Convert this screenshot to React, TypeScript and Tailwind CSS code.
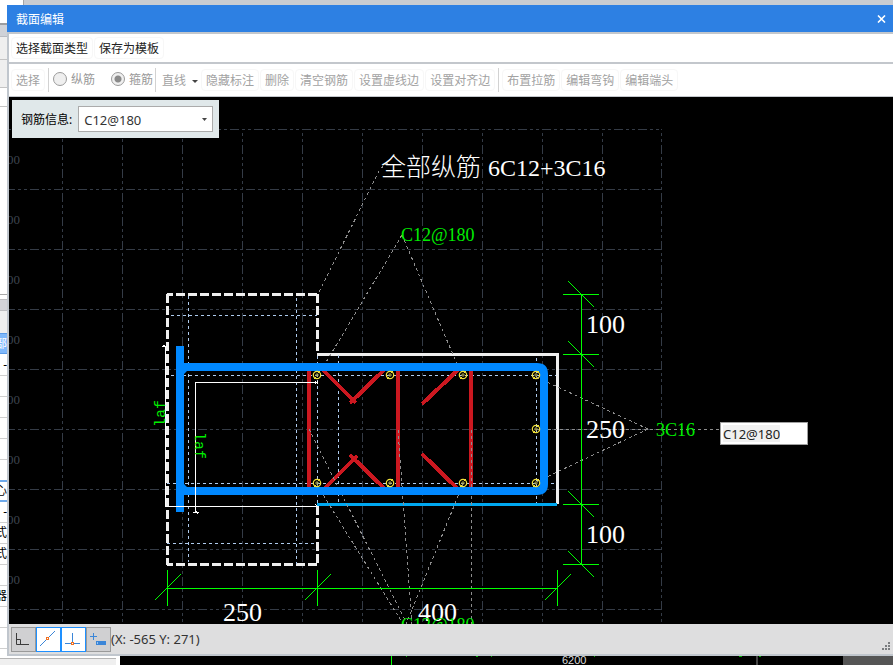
import React, { useState } from "react";
import clsx from "clsx";

const GRID_X = [62, 122, 182, 242, 302, 362, 422, 482, 542, 602, 661];
const GRID_Y = [129, 189, 249, 309, 369, 429, 489, 549, 609];

const REBARS = [
  [317, 375],
  [390, 375],
  [463, 375],
  [536, 375],
  [536, 429],
  [317, 483],
  [390, 483],
  [463, 483],
  [536, 483],
];

// rows of the main window that stay visible left of the dialog
const SIDE_ROWS = [
  { className: "h-[25px] bg-white border-b-2 border-[#9c9da0]" },
  { className: "h-[12px] bg-[#cfd2d8] border-b border-[#b9bcc2]" },
  { className: "h-[23px] bg-[#efefef] border-b border-[#c4c4c4]" },
  { className: "h-[28px] bg-[#efefef] border-b border-[#c4c4c4]" },
  { className: "h-[19px] bg-white border-b border-[#c4c4c4]" },
  { className: "h-[188px] bg-white border-b border-[#a8a8a8]" },
  { className: "h-[4px] bg-white" },
  { className: "h-[12px] bg-[#d2d3d8] border-y border-[#bdbdc0]" },
  { className: "h-[22px] bg-[#efefef]" },
  { className: "h-[21px] bg-[#7fb8fb] border-y border-[#5b9be8] text-white", text: "部" },
  { className: "h-[22px] bg-white border-b border-[#cfcfcf] text-black", text: "-" },
  { className: "h-[21px] bg-white border-b border-[#cfcfcf]" },
  { className: "h-[21px] bg-white border-b border-[#cfcfcf]" },
  { className: "h-[21px] bg-white border-b border-[#cfcfcf]" },
  { className: "h-[21px] bg-white border-b border-[#cfcfcf]" },
  { className: "h-[22px] bg-white border-b-2 border-[#6ea9ea]" },
  { className: "h-[20px] bg-white border-b-2 border-[#6ea9ea] text-black", text: "心" },
  { className: "h-[21px] bg-white border-b border-[#cfcfcf] text-black", text: "-" },
  { className: "h-[21px] bg-white border-b border-[#cfcfcf] text-black", text: "式" },
  { className: "h-[21px] bg-white border-b border-[#cfcfcf] text-black", text: "式" },
  { className: "h-[21px] bg-white border-b border-[#cfcfcf]" },
  { className: "h-[21px] bg-white border-b border-[#cfcfcf] text-black", text: "器" },
  { className: "h-[21px] bg-white border-b border-[#cfcfcf]" },
  { className: "h-[21px] bg-white border-b border-[#cfcfcf]" },
  { className: "grow bg-white" },
];

function ToolButton({ children, disabled }: { children: React.ReactNode; disabled?: boolean }) {
  return (
    <button
      type="button"
      disabled={disabled}
      className="flex h-[22px] shrink-0 items-center rounded border border-[#f7f7f7] px-1 pt-0.5 whitespace-nowrap text-[#222] disabled:text-[#a2a2a2]"
    >
      {children}
    </button>
  );
}

function Separator() {
  return <div className="h-6 w-px shrink-0 bg-[#d2d2d2]" />;
}

function BarRadio({ label, value, defaultChecked }: { label: string; value: string; defaultChecked?: boolean }) {
  return (
    <label className="flex shrink-0 items-center gap-1 whitespace-nowrap text-[#999]">
      <input
        type="radio"
        name="bar-kind"
        value={value}
        defaultChecked={defaultChecked}
        disabled
        className="mb-0.5 size-[14px] appearance-none rounded-full border border-[#9b9b9b] bg-[#efefef] checked:bg-[radial-gradient(circle,#8a8a8a_3px,#efefef_4px)]"
      />
      {label}
    </label>
  );
}

function RightTick({ y }: { y: number }) {
  return <path d={`M563 ${y + 0.5}H599M568 ${y - 13}L594 ${y + 13}`} />;
}

function BottomTick({ x }: { x: number }) {
  return <path d={`M${x + 0.5} 570V606M${x - 12} 600L${x + 14} 574`} />;
}

function SectionDrawing() {
  return (
    <svg width="884" height="527" viewBox="9 97 884 527" fill="none" className="block shrink-0" role="img" aria-label="截面">
      <g stroke="#343b46" shapeRendering="crispEdges" strokeDasharray="9 3 3 3 3 3">
        {GRID_Y.map((y) => (
          <path key={y} d={`M9 ${y + 0.5}H662`} strokeDashoffset={y === 129 ? 19 : 3} />
        ))}
        {GRID_X.map((x) => (
          <path key={x} d={`M${x + 0.5} 129V623`} strokeDashoffset="8" />
        ))}
      </g>
      <g className="font-['Liberation_Serif',serif] text-[13px]" fill="#3d444f" textAnchor="end">
        {GRID_Y.slice(0, 8).map((y) => (
          <text key={y} x="20" y={y + 35}>
            00
          </text>
        ))}
      </g>

      {/* concrete outline */}
      <g stroke="#efefef" strokeWidth="3" shapeRendering="crispEdges">
        <path d="M167 294.5H318" strokeDasharray="9 3" strokeDashoffset="3" />
        <path d="M167.5 294V565" strokeDasharray="9 3" />
        <path d="M167 564.5H318" strokeDasharray="9 3" strokeDashoffset="3" />
        <path d="M317.5 294V354M317.5 506V565" strokeDasharray="9 3" />
        <path d="M317 354.5H557.5V504" />
      </g>
      <path d="M317 504.5H557" stroke="#00a8f0" strokeWidth="3" shapeRendering="crispEdges" />

      {/* cover lines */}
      <g stroke="#aecbee" strokeDasharray="3 3" shapeRendering="crispEdges">
        <path d="M188.5 296V562M296.5 298V564M317.5 356V506M338.5 355V503M536.5 358V503" />
        <path d="M171 315.5H317M171 375.5H556M167 483.5H556M167 543.5H317" />
      </g>

      {/* ties */}
      <g stroke="#cc1820" strokeWidth="4" shapeRendering="crispEdges">
        <path d="M309 371V487M398 371V487M471 371V487" />
        <path d="M323 370L356 403M384 370L350 403M458 370L422 404" />
        <path d="M325 488L357 456M384 488L350 455M457 488L422 454" />
      </g>

      {/* leaders */}
      <g stroke="#8d8d8d" strokeDasharray="3 3" shapeRendering="crispEdges">
        <path d="M388 163L380 169L318 294" />
        <path d="M402 235L325 364M402 235L460 371" />
        <path d="M648 429L536 377M648 429L536 482M536 429.5H720" />
        <path d="M309 429L407 624M317 485L403 624M398 430L412 624M463 484L406 624M471.5 430V624" />
      </g>

      {/* stirrup */}
      <g stroke="#0088ff" strokeWidth="8">
        <path d="M180 346V512" />
        <path d="M180 367H537Q544 367 544 374V484Q544 491 537 491H180" />
      </g>
      <path d="M184 371H187L184 374ZM184 487H187L184 484Z" fill="#0088ff" />

      {REBARS.map(([x, y]) => (
        <g key={`${x}-${y}`} transform={`translate(${x} ${y})`}>
          <circle r="3.7" stroke="#f2e23c" strokeWidth="1.2" />
          <path d="M-2 0H2M0 -2V2" stroke="#a8a24c" />
          <path d="M1 -2L3 -4M-1 2L-3 4" stroke="#f2e23c" />
        </g>
      ))}

      {/* anchorage lines */}
      <g stroke="#ffffff" shapeRendering="crispEdges">
        <path d="M165.5 346V506.5H318M162 346.5H167M163 345L166 347M315 504L318 507" />
        <path d="M195.5 513V382.5H318M193 512.5H199M194 513L196 511L198 514M315 381L318 384M318 381L315 384" />
      </g>

      <g stroke="#00ff00" shapeRendering="crispEdges">
        <path d="M581.5 294V564M167 588.5H557" />
        <RightTick y={294} />
        <RightTick y={354} />
        <RightTick y={504} />
        <RightTick y={564} />
        <BottomTick x={167} />
        <BottomTick x={317} />
        <BottomTick x={557} />
      </g>

      <g className="font-['Liberation_Serif',serif] text-[26px]" fill="#ffffff">
        <text x="586" y="333">100</text>
        <text x="586" y="438">250</text>
        <text x="586" y="543">100</text>
        <text x="223" y="621">250</text>
        <text x="418" y="621">400</text>
      </g>
      <text x="381" y="176" fill="#ffffff" className="font-['Noto_Sans_CJK_SC',sans-serif] text-[25px] font-light">
        全部纵筋
      </text>
      <text x="488" y="176" fill="#ffffff" className="font-['Liberation_Serif',serif] text-[24px]">
        6C12+3C16
      </text>
      <g className="font-['Liberation_Serif',serif] text-[18px]" fill="#00ee00">
        <text x="401" y="241">C12@180</text>
        <text x="656" y="436">3C16</text>
        <text x="401" y="631">C12@180</text>
      </g>
      <g className="font-['Liberation_Mono',monospace] text-[15px]" fill="#00ee00">
        <text transform="translate(165 427) rotate(-90)">laf</text>
        <text transform="translate(195 432) rotate(90)">laf</text>
      </g>
    </svg>
  );
}

const SNAP_TOOLS = [
  {
    label: "直角",
    icon: (
      <g stroke="#3a3a3a" strokeWidth="1">
        <path d="M4.5 5V16.5H17M4.5 11.5H8.5V16.5" />
      </g>
    ),
  },
  {
    label: "中点",
    icon: (
      <>
        <path d="M3 18L18 3" stroke="#3b86d8" />
        <rect x="9.5" y="9.5" width="2" height="2" fill="#fff" stroke="#f07022" />
      </>
    ),
  },
  {
    label: "垂足",
    icon: (
      <>
        <path d="M10.5 5V15.5M3 15.5H18" stroke="#3b86d8" strokeWidth="1" />
        <rect x="9.5" y="14.5" width="2" height="2" fill="#fff" stroke="#f07022" />
      </>
    ),
  },
  {
    label: "动态输入",
    icon: (
      <>
        <path d="M6.5 5V12M3 8.5H10" stroke="#3b86d8" />
        <rect x="9" y="13" width="10" height="4" fill="#3b86d8" />
        <path d="M10.5 14V16" stroke="#9cc4ee" />
      </>
    ),
  },
];

function StatusBar() {
  const [active, setActive] = useState([false, true, true, false]);

  return (
    <footer className="flex h-8 items-center border-b-2 border-[#c0c6cd] bg-[#dededf] pl-0.5">
      {SNAP_TOOLS.map((tool, i) => (
        <button
          key={tool.label}
          type="button"
          aria-label={tool.label}
          aria-pressed={active[i]}
          onClick={() => setActive(active.map((on, n) => (n === i ? !on : on)))}
          className={clsx(
            "flex size-[25px] shrink-0 items-center justify-center border",
            active[i] ? "border-[#1e90ff] bg-white" : "border-[#9a9a9a] bg-[#d0d0d2]"
          )}
        >
          <svg width="23" height="23" viewBox="0 0 23 23" fill="none">
            {tool.icon}
          </svg>
        </button>
      ))}
      <span className="text-[13px] whitespace-nowrap text-[#333]">(X: -565 Y: 271)</span>
      <svg width="9" height="9" viewBox="0 0 9 9" fill="#7a7d80" className="mt-3.5 mr-0.5 ml-auto">
        <path d="M6 0h2v2h-2zM3 3h2v2h-2zM6 3h2v2h-2zM0 6h2v2h-2zM3 6h2v2h-2zM6 6h2v2h-2z" />
      </svg>
    </footer>
  );
}

export default function App() {
  const [barInfo, setBarInfo] = useState("C12@180");
  const [edit, setEdit] = useState("C12@180");

  return (
    <div className="flex min-h-screen flex-col overflow-hidden bg-white font-['Noto_Sans','Noto_Sans_CJK_SC',sans-serif] text-[12px] leading-4">
      <div className="flex grow">
        <aside className="flex w-[7px] shrink-0 flex-col overflow-hidden" aria-hidden="true">
          {SIDE_ROWS.map((row, i) => (
            <div key={i} className={clsx("flex shrink-0 items-center justify-end overflow-hidden", row.className)}>
              {row.text}
            </div>
          ))}
        </aside>

        <main className="flex min-w-0 grow flex-col">
          <div className="flex h-[5px] bg-[#c9ccd1]">
            <div className="w-[17px] border-r border-[#a5a5a5] bg-white" />
          </div>
          <header className="flex h-[27px] items-center justify-between bg-[#2d80e3] pr-[7px] pl-[9px] text-white">
            <h1 className="pt-0.5">截面编辑</h1>
            <button type="button" aria-label="关闭">
              <svg width="9" height="8" viewBox="0 0 9 8" fill="none" stroke="#fff" strokeWidth="1.6">
                <path d="M1 0.5L8 7.5M8 0.5L1 7.5" />
              </svg>
            </button>
          </header>

          <div className="flex grow flex-col border-l-2 border-[#c0c6cd]">
            <nav className="flex h-[30px] items-center gap-px border-t-2 border-[#c3c7cc] bg-white pl-0.5">
              <ToolButton>选择截面类型</ToolButton>
              <ToolButton>保存为模板</ToolButton>
            </nav>
            <div className="flex h-[35px] items-center gap-px border-t-2 border-b border-[#c3c7cc] bg-white pl-0.5" role="toolbar">
              <ToolButton disabled>选择</ToolButton>
              <div className="ml-0.5 flex items-center gap-1">
                <Separator />
                <BarRadio label="纵筋" value="longitudinal" />
                <div className="ml-3">
                  <BarRadio label="箍筋" value="stirrup" defaultChecked />
                </div>
                <div className="-ml-0.5">
                  <Separator />
                </div>
              </div>
              <button type="button" disabled className="flex shrink-0 items-center gap-1.5 px-[5px] pt-0.5 whitespace-nowrap text-[#a2a2a2]">
                直线
                <svg width="6" height="3" viewBox="0 0 6 3" fill="#444">
                  <path d="M0 0H6L3 3Z" />
                </svg>
              </button>
              <div className="-ml-[3px] flex gap-px">
                <ToolButton disabled>隐藏标注</ToolButton>
                <ToolButton disabled>删除</ToolButton>
                <ToolButton disabled>清空钢筋</ToolButton>
                <ToolButton disabled>设置虚线边</ToolButton>
                <ToolButton disabled>设置对齐边</ToolButton>
              </div>
              <div className="mx-0.5">
                <Separator />
              </div>
              <ToolButton disabled>布置拉筋</ToolButton>
              <ToolButton disabled>编辑弯钩</ToolButton>
              <ToolButton disabled>编辑端头</ToolButton>
            </div>

            <section className="relative grow overflow-hidden bg-black">
              <SectionDrawing />
              <div className="absolute top-[3px] left-[3px] flex h-[38px] items-center gap-1.5 bg-[#e0e8ea] pr-1.5 pl-[9px]">
                <label htmlFor="bar-info" className="pt-0.5 whitespace-nowrap text-black">
                  钢筋信息:
                </label>
                <div className="relative">
                  <select
                    id="bar-info"
                    value={barInfo}
                    onChange={(e) => setBarInfo(e.target.value)}
                    className="block h-[26px] w-[135px] appearance-none border border-[#ababab] bg-white pt-px pl-[5px] text-[13px] text-[#333]"
                  >
                    <option>C12@180</option>
                  </select>
                  <svg width="5" height="3" viewBox="0 0 5 3" fill="#444" className="pointer-events-none absolute top-3 right-1.5">
                    <path d="M0 0H5L2.5 3Z" />
                  </svg>
                </div>
              </div>
              <div className="absolute top-[325px] left-[711px] flex h-[23px] w-[88px] items-center border border-[#a0a0a0] bg-white px-0.5">
                <input
                  type="text"
                  aria-label="标注"
                  value={edit}
                  onChange={(e) => setEdit(e.target.value)}
                  className="h-[17px] w-[57px] bg-[#f0f0f0] text-[13px] text-[#222] outline-none"
                />
              </div>
            </section>

            <StatusBar />
          </div>
        </main>
      </div>

      <div className="flex h-[9px] overflow-hidden bg-[#555]" aria-hidden="true">
        <div className="w-[116px] shrink-0 bg-[#efefef]">
          <div className="h-[3px] border-b border-[#b5b5b5] bg-white" />
        </div>
        <svg width="727" height="9" viewBox="116 656 727 9" className="shrink-0">
          <rect x="116" y="656" width="4" height="9" fill="#fff" />
          <rect x="120" y="656" width="723" height="9" fill="#000" />
          <rect x="391" y="656" width="1" height="9" fill="#00ff00" />
          <path d="M406 656h1v1h-1zM476 656h2v1h-2zM491 656h1v1h-1zM594 656h1v1h-1zM739 656h3v1h-3zM759 656h2v1h-2z" fill="#00b000" />
          <rect x="756" y="656" width="2" height="9" fill="#444" />
          <text x="562" y="664" fill="#ddd" className="font-['Liberation_Sans',sans-serif] text-[11px]">
            6200
          </text>
        </svg>
      </div>
    </div>
  );
}
